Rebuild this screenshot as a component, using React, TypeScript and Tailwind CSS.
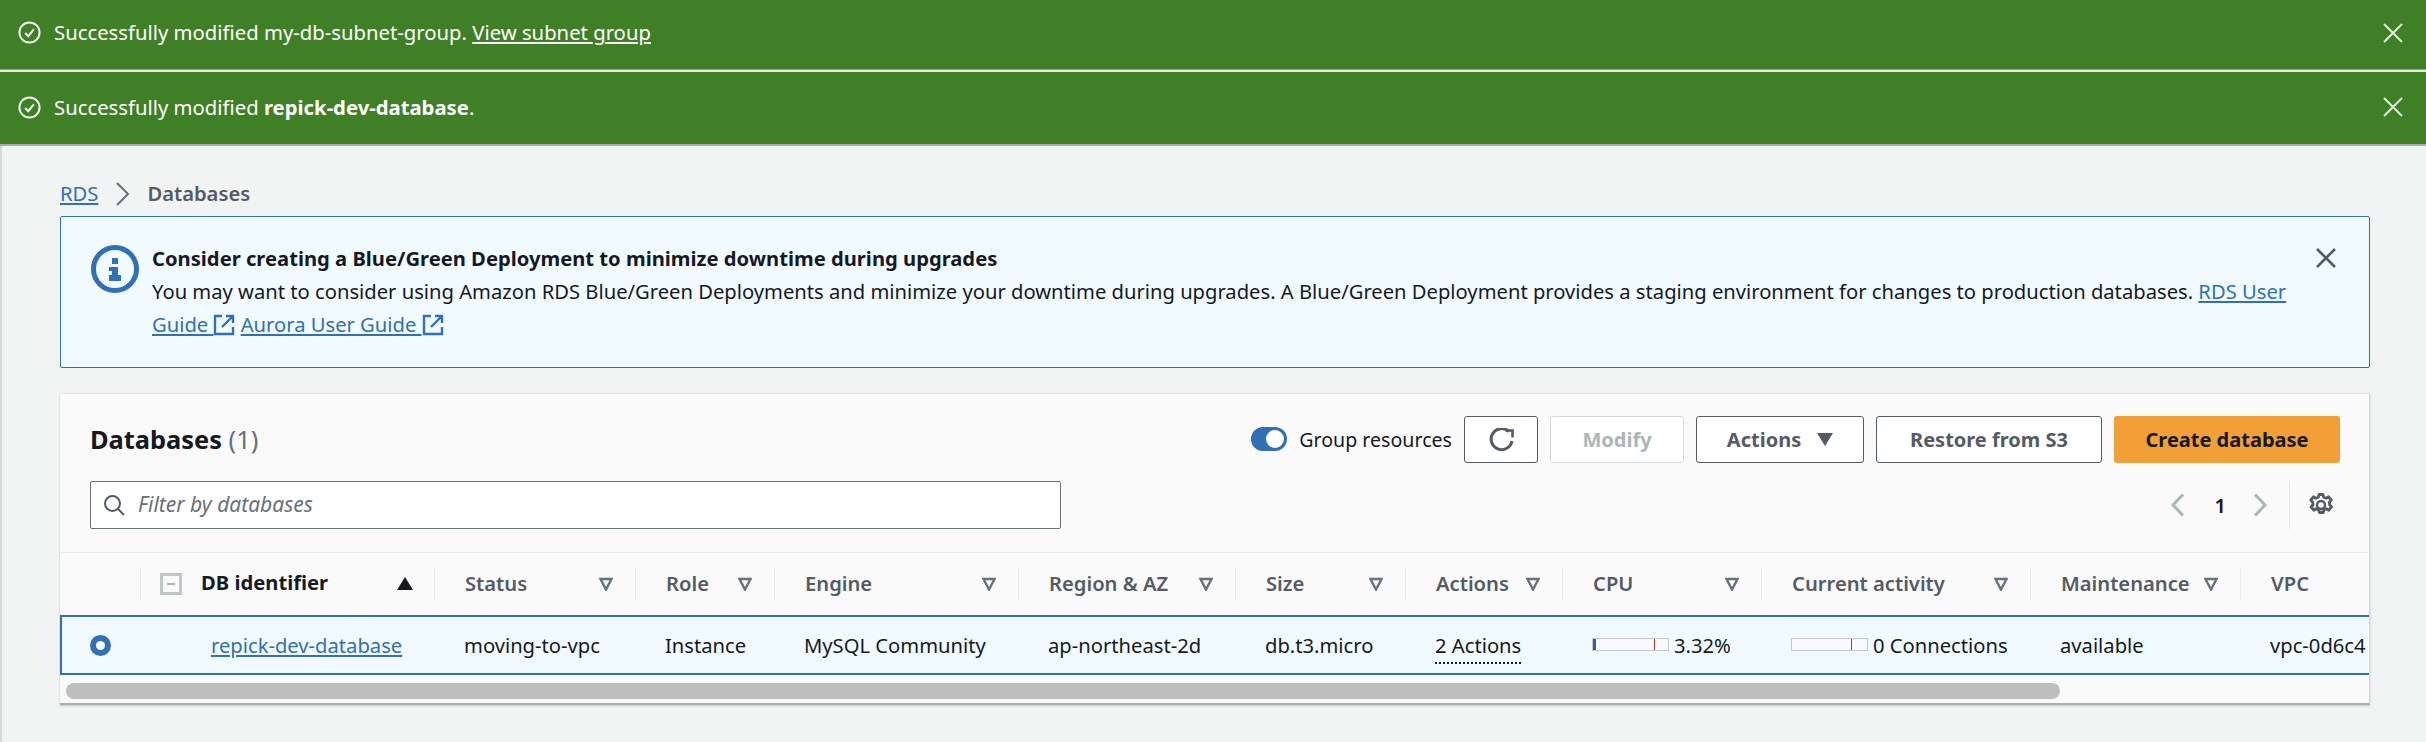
const font = { fontFamily: '"Noto Sans", sans-serif' };

const CheckCircle = () => (
  <svg width="23" height="23" viewBox="0 0 24 24" fill="none" stroke="#f4f4f4" strokeWidth="2.1" className="shrink-0">
    <circle cx="12" cy="12" r="10.5" />
    <path d="M7.5 12.5l3.2 3.4 6-7.4" />
  </svg>
);

const Close = ({ color, width }: { color: string; width: number }) => (
  <svg width="20" height="20" viewBox="0 0 20 20" fill="none" stroke={color} strokeWidth={width}>
    <path d="M1 1l18 18M19 1L1 19" />
  </svg>
);

const External = () => (
  <svg width="22" height="22" viewBox="0 0 22 22" fill="none" stroke="#2f70b8" strokeWidth="2.4" className="inline-block align-[-4px]">
    <path d="M9 2H2v18h18v-7M13 2h7v7M20 2L9 13" />
  </svg>
);

const FilterArrow = () => (
  <svg width="14" height="14" viewBox="0 0 14 14" fill="none" stroke="#687078" strokeWidth="2.4" className="shrink-0">
    <path d="M1.5 2h11L7 12.5z" />
  </svg>
);

const Flash = ({ children, className }: { children: React.ReactNode; className: string }) => (
  <div className={`flex items-center justify-between bg-[#3f7f25] pl-[18px] pr-[23px] text-white text-[20.3px] ${className}`}>
    <div className="flex items-center gap-[13px]">
      <CheckCircle />
      <div>{children}</div>
    </div>
    <Close color="#e4e8e2" width={2} />
  </div>
);

const headers = ["Status", "Role", "Engine", "Region & AZ", "Size", "Actions", "CPU", "Current activity", "Maintenance"];

const cols = "grid grid-cols-[80px_294px_201px_139px_244px_217px_170px_157px_199px_269px_210px_130px]";

const Meter = ({ fill, tick }: { fill: number; tick: number }) => (
  <div className="relative w-[77px] h-[13px] border border-[#c6c6c6] bg-[#f7fbfd] shrink-0">
    <div className="absolute left-0 top-0 bottom-0 bg-[#2e5f9e]" style={{ width: fill }} />
    <div className="absolute top-0 bottom-0 w-px bg-[#d13212]" style={{ left: tick }} />
  </div>
);

const App = () => {
  return (
    <div style={font} className="min-h-screen bg-[#f2f3f3] text-[#16191f] text-[20.2px] overflow-hidden">
      <Flash className="h-[69px] pb-[4px]">
        Successfully modified my-db-subnet-group.{" "}
        <a className="underline underline-offset-2">View subnet group</a>
      </Flash>
      <div className="h-[3px] border-t border-[#9a9a9a] bg-[#e8e8e8]" />
      <Flash className="h-[72px] pb-[2px]">
        Successfully modified <b>repick-dev-database</b>.
      </Flash>
      <div className="h-[2px] bg-[#a8a8a8]" />

      <div className="border-l-2 border-[#d5d8d8] pl-[58px] pr-[56px] pt-[30px] h-[596px]">
        <div className="flex items-center h-[35px] text-[20.2px]">
          <a className="text-[#2f70b8] underline underline-offset-2">RDS</a>
          <svg width="16" height="24" viewBox="0 0 16 24" fill="none" stroke="#687078" strokeWidth="2" className="ml-[17px] mr-[16px]">
            <path d="M2 1l11 11L2 23" />
          </svg>
          <span className="text-[#545b64] font-semibold">Databases</span>
        </div>

        <div className="mt-[5px] h-[152px] border border-[#2f70b8] rounded-[2px] bg-[#f1faff] flex pl-[30px] pr-[33px] pt-[28px]">
          <svg width="48" height="48" viewBox="0 0 48 48" fill="none" className="shrink-0">
            <circle cx="24" cy="24" r="21.5" stroke="#2f70b8" strokeWidth="5" />
            <path d="M21 13h6v6h-6zM18 22h9v8h3v6H18v-6h3v-4h-3z" fill="#2f70b8" />
          </svg>
          <div className="ml-[13px] flex-1 leading-[33px] -mt-[3px]">
            <div className="font-bold">Consider creating a Blue/Green Deployment to minimize downtime during upgrades</div>
            <div>
              You may want to consider using Amazon RDS Blue/Green Deployments and minimize your downtime during upgrades. A Blue/Green Deployment provides a staging environment for changes to production databases.{" "}
              <a className="text-[#2f70b8] underline underline-offset-2">RDS User</a>
              <br />
              <a className="text-[#2f70b8] underline underline-offset-2">Guide </a>
              <External />{" "}
              <a className="text-[#2f70b8] underline underline-offset-2">Aurora User Guide </a>
              <External />
            </div>
          </div>
          <div className="shrink-0 mt-[3px]">
            <Close color="#545b64" width={2.6} />
          </div>
        </div>

        <div className="mt-[25px] h-[312px] bg-[#fafafa] border-t border-[#e6e8e8] border-r border-r-[#d5d8d8] border-b-2 border-b-[#a9aeb0] shadow-[0_1px_2px_rgba(0,0,0,0.2)] overflow-hidden">
          <div className="h-[159px] pl-[30px] pr-[29px] pt-[22px] border-b border-[#eaeded]">
            <div className="flex items-center justify-between h-[47px]">
              <div className="text-[25.4px] font-bold">
                Databases <span className="font-normal text-[#687078]">(1)</span>
              </div>
              <div className="flex items-center gap-[12px] text-[20px] font-bold text-[#545b64]">
                <div className="flex items-center gap-[12px] font-normal text-[#16191f] text-[19.6px]">
                  <div className="w-[36px] h-[24px] rounded-full bg-[#2f70b8] flex items-center justify-end pr-[3px]">
                    <div className="w-[18px] h-[18px] rounded-full bg-white" />
                  </div>
                  Group resources
                </div>
                <button className="w-[74px] h-[47px] flex items-center justify-center border border-[#545b64] rounded-[3px] bg-white">
                  <svg width="25" height="24" viewBox="0 0 25 24" fill="none" stroke="#545b64" strokeWidth="3">
                    <path d="M20 3.6A10.5 10.5 0 1 0 23 13" />
                    <path d="M16.5 2.5h7v7" strokeWidth="2.6" />
                  </svg>
                </button>
                <button className="w-[134px] h-[47px] border border-[#d5dbdb] rounded-[3px] bg-white text-[#aab7b8]">Modify</button>
                <button className="w-[168px] h-[47px] flex items-center justify-center gap-[16px] border border-[#545b64] rounded-[3px] bg-white">
                  Actions
                  <svg width="16" height="13" viewBox="0 0 16 13" fill="#545b64">
                    <path d="M0 0h16L8 13z" />
                  </svg>
                </button>
                <button className="w-[226px] h-[47px] border border-[#545b64] rounded-[3px] bg-white">Restore from S3</button>
                <button className="w-[226px] h-[47px] rounded-[3px] bg-[#f29f38] text-[#16191f]">Create database</button>
              </div>
            </div>
            <div className="flex items-center justify-between mt-[18px]">
              <div className="w-[971px] h-[48px] border border-[#687078] rounded-[2px] bg-white flex items-center pl-[12px] gap-[13px]">
                <svg width="22" height="22" viewBox="0 0 22 22" fill="none" stroke="#545b64" strokeWidth="2">
                  <circle cx="9.5" cy="9.5" r="7.5" />
                  <path d="M15 15l6 6" />
                </svg>
                <span className="italic text-[#687078] text-[21px]">Filter by databases</span>
              </div>
              <div className="flex items-center h-[48px] mr-[7px]">
                <svg width="16" height="24" viewBox="0 0 16 24" fill="none" stroke="#aab7b8" strokeWidth="3">
                  <path d="M14 1.5L4 12l10 10.5" />
                </svg>
                <span className="ml-[29px] mr-[27px] font-semibold">1</span>
                <svg width="16" height="24" viewBox="0 0 16 24" fill="none" stroke="#aab7b8" strokeWidth="3">
                  <path d="M2 1.5L12 12 2 22.5" />
                </svg>
                <div className="ml-[20px] h-[48px] pl-[19px] border-l border-[#e2e5e5] flex items-center">
                  <svg width="24" height="24" viewBox="0 0 24 24" fill="none" stroke="#545b64" strokeWidth="2.8">
                    <circle cx="12" cy="12" r="4" strokeWidth="2.4" />
                    <path d="M10 1.5h4l.7 2.8 2.3 1 2.5-1.5 2.7 3.2-1.9 2.3.3 2.4 1.9 2.3-2.7 3.2-2.5-1.5-2.3 1-.7 2.8h-4l-.7-2.8-2.3-1-2.5 1.5-2.7-3.2 1.9-2.3-.3-2.4-1.9-2.3 2.7-3.2 2.5 1.5 2.3-1z" strokeLinejoin="round" />
                  </svg>
                </div>
              </div>
            </div>
          </div>

          <div className={`${cols} h-[62px] pt-[14px] text-[20.2px] font-semibold text-[#545b64] whitespace-nowrap`}>
            <div />
            <div className="h-[33px] border-l border-[#eaeded] flex items-center pl-[19px] pr-[21px]">
              <div className="w-[22px] h-[22px] border-[3px] border-[#bcc8c8] flex items-center justify-center mr-[19px]">
                <div className="w-[8px] h-[2px] bg-[#aab7b8]" />
              </div>
              <span className="font-bold text-[#16191f] flex-1 -mt-[3px]">DB identifier</span>
              <svg width="16" height="13" viewBox="0 0 16 13" fill="#16191f">
                <path d="M0 13h16L8 0z" />
              </svg>
            </div>
            {headers.map((h) => (
              <div key={h} className="h-[33px] border-l border-[#eaeded] flex items-center justify-between pl-[30px] pr-[22px]">
                {h}
                <FilterArrow />
              </div>
            ))}
            <div className="h-[33px] border-l border-[#eaeded] flex items-center pl-[30px]">VPC</div>
          </div>

          <div className={`${cols} h-[60px] items-center border-y-2 border-l-2 border-[#2f70b8] bg-[#f1faff] text-[20.2px] whitespace-nowrap`}>
            <div className="pl-[28px]">
              <div className="w-[21px] h-[21px] rounded-full bg-[#2f70b8] flex items-center justify-center">
                <div className="w-[9px] h-[9px] rounded-full bg-white" />
              </div>
            </div>
            <div className="pl-[69px]">
              <a className="text-[#2f70b8] underline underline-offset-2">repick-dev-database</a>
            </div>
            <div className="pl-[28px]">moving-to-vpc</div>
            <div className="pl-[28px]">Instance</div>
            <div className="pl-[28px]">MySQL Community</div>
            <div className="pl-[28px]">ap-northeast-2d</div>
            <div className="pl-[28px]">db.t3.micro</div>
            <div className="pl-[28px]">
              <span className="border-b-2 border-dotted border-[#16191f] pb-[3px]">2 Actions</span>
            </div>
            <div className="pl-[28px] flex items-center gap-[5px]">
              <Meter fill={3} tick={61} />
              3.32%
            </div>
            <div className="pl-[28px] flex items-center gap-[5px]">
              <Meter fill={0} tick={59} />
              0 Connections
            </div>
            <div className="pl-[28px]">available</div>
            <div className="pl-[28px]">vpc-0d6c4</div>
          </div>

          <div className="pl-[6px] pt-[8px]">
            <div className="w-[1994px] h-[16px] rounded-full bg-[#bebebe]" />
          </div>
        </div>
      </div>
    </div>
  );
};

export default App;
